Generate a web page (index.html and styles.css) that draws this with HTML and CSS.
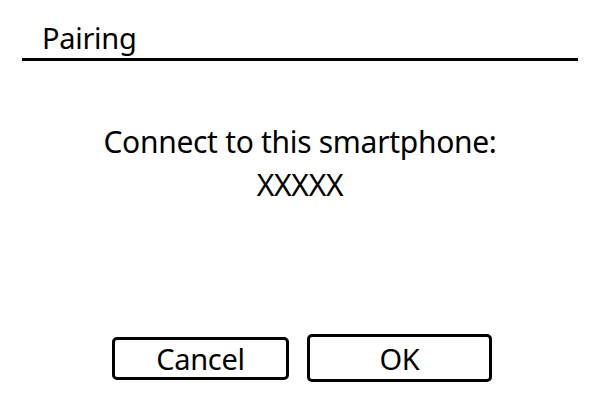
FILE: index.html
```html
<!DOCTYPE html>
<html lang="en">
<head>
    <meta charset="UTF-8">
    <meta name="viewport" content="width=device-width, initial-scale=1.0">
    <title>Pairing</title>
    <link rel="stylesheet" href="styles.css">
</head>
<body>
    <div class="screen">
        <div class="header">
            <h1 class="title">Pairing</h1>
        </div>
        <div class="message">
            <p>Connect to this smartphone:</p>
            <p>XXXXX</p>
        </div>
        <div class="actions">
            <button class="btn">Cancel</button>
            <button class="btn selected">OK</button>
        </div>
    </div>
</body>
</html>
```

FILE: styles.css
```css
* {
    margin: 0;
    padding: 0;
    box-sizing: border-box;
    font-family: 'Noto Sans', 'Open Sans', sans-serif;
}

body {
    background: #fff;
    color: #000;
}

.screen {
    width: 600px;
    height: 400px;
    display: flex;
    flex-direction: column;
}

.header {
    margin: 0 22px;
    padding: 20px 0 0 20px;
    height: 61px;
    border-bottom: 3px solid #000;
}

.title {
    font-size: 29px;
    font-weight: normal;
    line-height: 36px;
    letter-spacing: -0.3px;
}

.message {
    margin-top: 59px;
    text-align: center;
    font-size: 30px;
    line-height: 43px;
    letter-spacing: -0.3px;
}

.actions {
    margin-top: auto;
    margin-bottom: 18px;
    display: flex;
    justify-content: center;
    align-items: center;
    gap: 18px;
    padding-left: 4px;
}

.btn {
    width: 177px;
    height: 43px;
    border: 3px solid #000;
    border-radius: 5px;
    background: #fff;
    font-size: 29px;
    line-height: 1;
    letter-spacing: -0.3px;
    color: #000;
}

.btn.selected {
    width: 185px;
    height: 48px;
}
```
